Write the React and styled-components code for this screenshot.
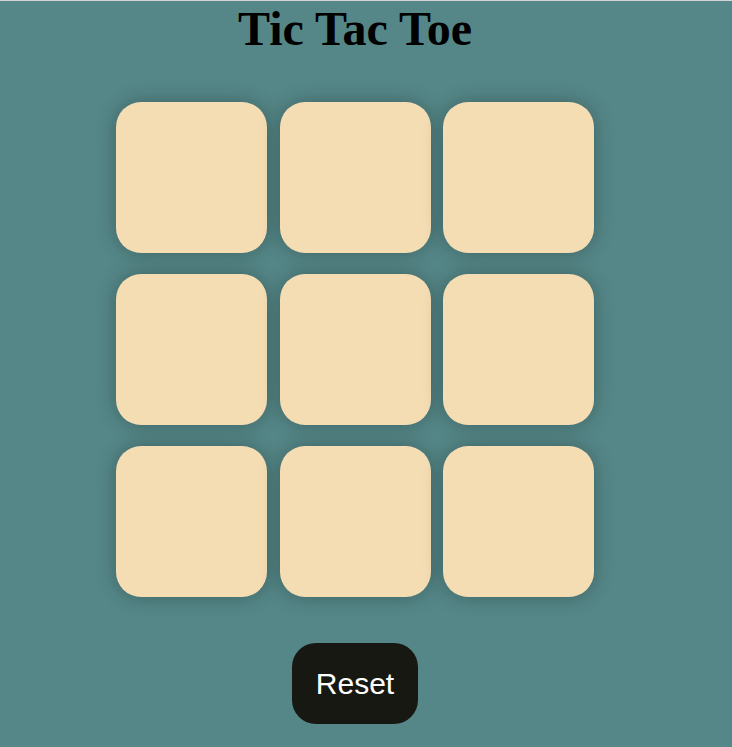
import React, { useState } from "react";
import styled, { createGlobalStyle } from "styled-components";

const GlobalStyle = createGlobalStyle`
  html, body {
    margin: 0;
    padding: 0;
    background: #558788;
  }
  body {
    border-top: 1px solid #d4d4d4;
  }
`;

const Page = styled.div`
  width: 710px;
  min-height: 746px;
  display: flex;
  flex-direction: column;
  align-items: center;
`;

const Title = styled.h1`
  margin: 0;
  font-family: "Liberation Serif", "Times New Roman", serif;
  font-weight: bold;
  font-size: 48px;
  color: #000;
`;

const Board = styled.div`
  margin-top: 46px;
  display: grid;
  grid-template-columns: repeat(3, 151px);
  grid-auto-rows: 151px;
  column-gap: 12.5px;
  row-gap: 21px;
`;

const Cell = styled.button`
  border: none;
  padding: 0;
  background: #f4ddb3;
  border-radius: 25px;
  box-shadow: 0 0 20px rgba(0, 0, 0, 0.28);
  font-family: "Liberation Sans", Arial, sans-serif;
  font-size: 64px;
  color: #181812;
  cursor: pointer;
`;

const ResetButton = styled.button`
  margin-top: 46px;
  width: 126px;
  height: 81px;
  border: none;
  border-radius: 24px;
  background: #181812;
  color: #fff;
  font-family: "Liberation Sans", Arial, sans-serif;
  font-size: 30px;
  cursor: pointer;
`;

export default function App() {
  const [cells, setCells] = useState(Array(9).fill(""));
  const [turn, setTurn] = useState("X");

  const play = (i) => {
    if (cells[i]) return;
    const next = [...cells];
    next[i] = turn;
    setCells(next);
    setTurn(turn === "X" ? "O" : "X");
  };

  return (
    <Page>
      <GlobalStyle />
      <Title>Tic Tac Toe</Title>
      <Board>
        {cells.map((c, i) => (
          <Cell key={i} onClick={() => play(i)}>
            {c}
          </Cell>
        ))}
      </Board>
      <ResetButton
        onClick={() => {
          setCells(Array(9).fill(""));
          setTurn("X");
        }}
      >
        Reset
      </ResetButton>
    </Page>
  );
}
